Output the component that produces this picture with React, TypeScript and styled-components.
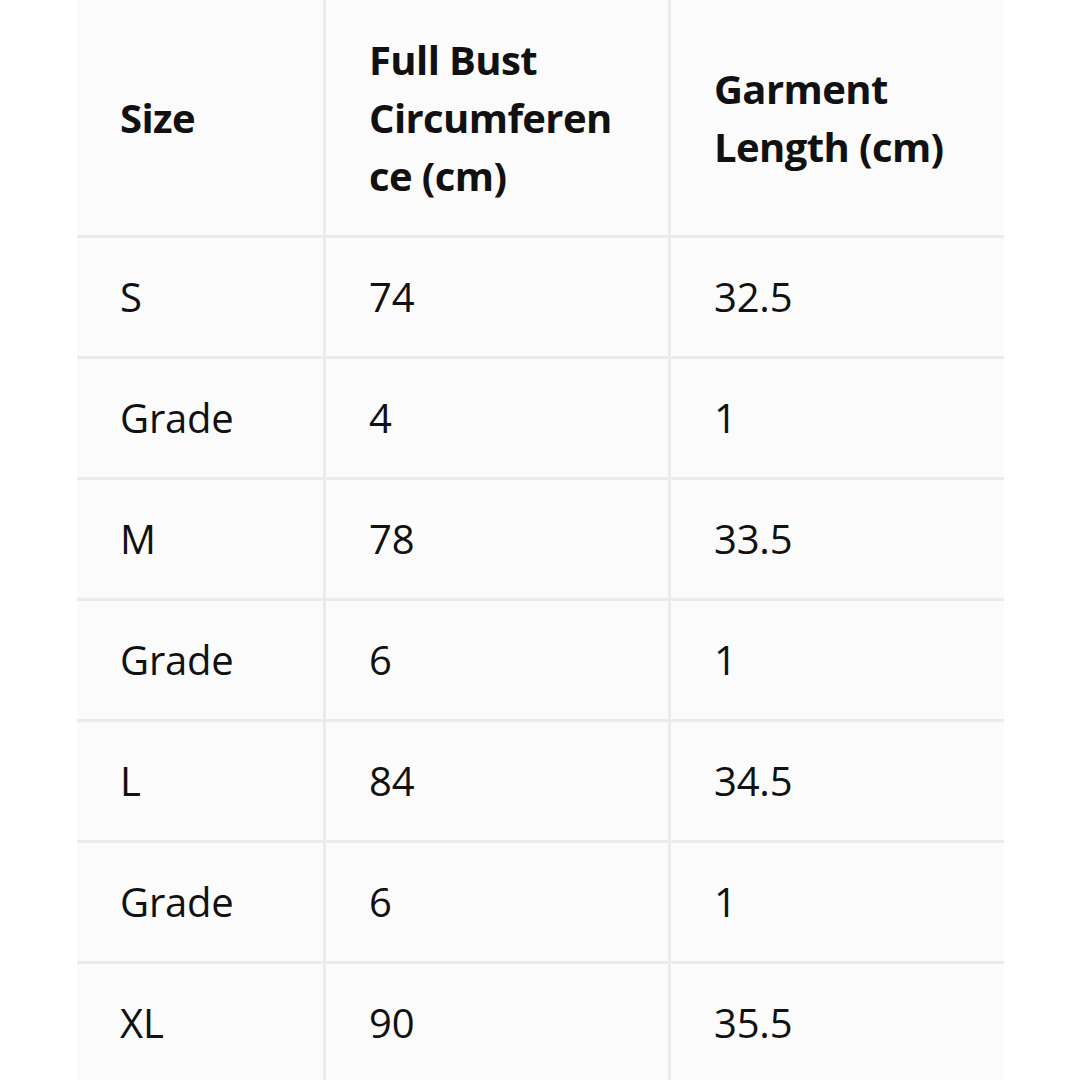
import React from "react";
import styled, { createGlobalStyle } from "styled-components";

const GlobalStyle = createGlobalStyle`
  html, body {
    margin: 0;
    padding: 0;
    background: #ffffff;
  }
  body {
    font-family: "Open Sans", "Noto Sans", sans-serif;
    color: #111111;
  }
`;

const Page = styled.div`
  width: 1080px;
  height: 1080px;
  overflow: hidden;
  padding-left: 77px;
  box-sizing: border-box;
`;

const Table = styled.table`
  width: 927px;
  table-layout: fixed;
  border-collapse: separate;
  border-spacing: 0;
  background: #fbfbfb;
`;

const HeadCell = styled.th`
  padding: 31px 44px 30px 43px;
  text-align: left;
  vertical-align: middle;
  font-size: 40px;
  line-height: 58px;
  font-weight: 700;
  letter-spacing: -0.6px;
  border-bottom: 3px solid #ebebeb;
  &:not(:last-child) {
    border-right: 3px solid #ebebeb;
  }
`;

const Cell = styled.td`
  padding: 30px 44px 30px 43px;
  vertical-align: middle;
  font-size: 40px;
  line-height: 58px;
  font-weight: 400;
  letter-spacing: -0.2px;
  border-bottom: 3px solid #ebebeb;
  &:not(:last-child) {
    border-right: 3px solid #ebebeb;
  }
`;

const rows = [
  ["S", "74", "32.5"],
  ["Grade", "4", "1"],
  ["M", "78", "33.5"],
  ["Grade", "6", "1"],
  ["L", "84", "34.5"],
  ["Grade", "6", "1"],
  ["XL", "90", "35.5"],
];

const App = () => {
  return (
    <>
      <GlobalStyle />
      <Page>
        <Table>
          <colgroup>
            <col style={{ width: 249 }} />
            <col style={{ width: 345 }} />
            <col style={{ width: 333 }} />
          </colgroup>
          <thead>
            <tr>
              <HeadCell>Size</HeadCell>
              <HeadCell>
                Full Bust
                <br />
                Circumferen
                <br />
                ce (cm)
              </HeadCell>
              <HeadCell>
                Garment
                <br />
                Length (cm)
              </HeadCell>
            </tr>
          </thead>
          <tbody>
            {rows.map((row, i) => (
              <tr key={i}>
                {row.map((value, j) => (
                  <Cell key={j}>{value}</Cell>
                ))}
              </tr>
            ))}
          </tbody>
        </Table>
      </Page>
    </>
  );
};

export default App;
